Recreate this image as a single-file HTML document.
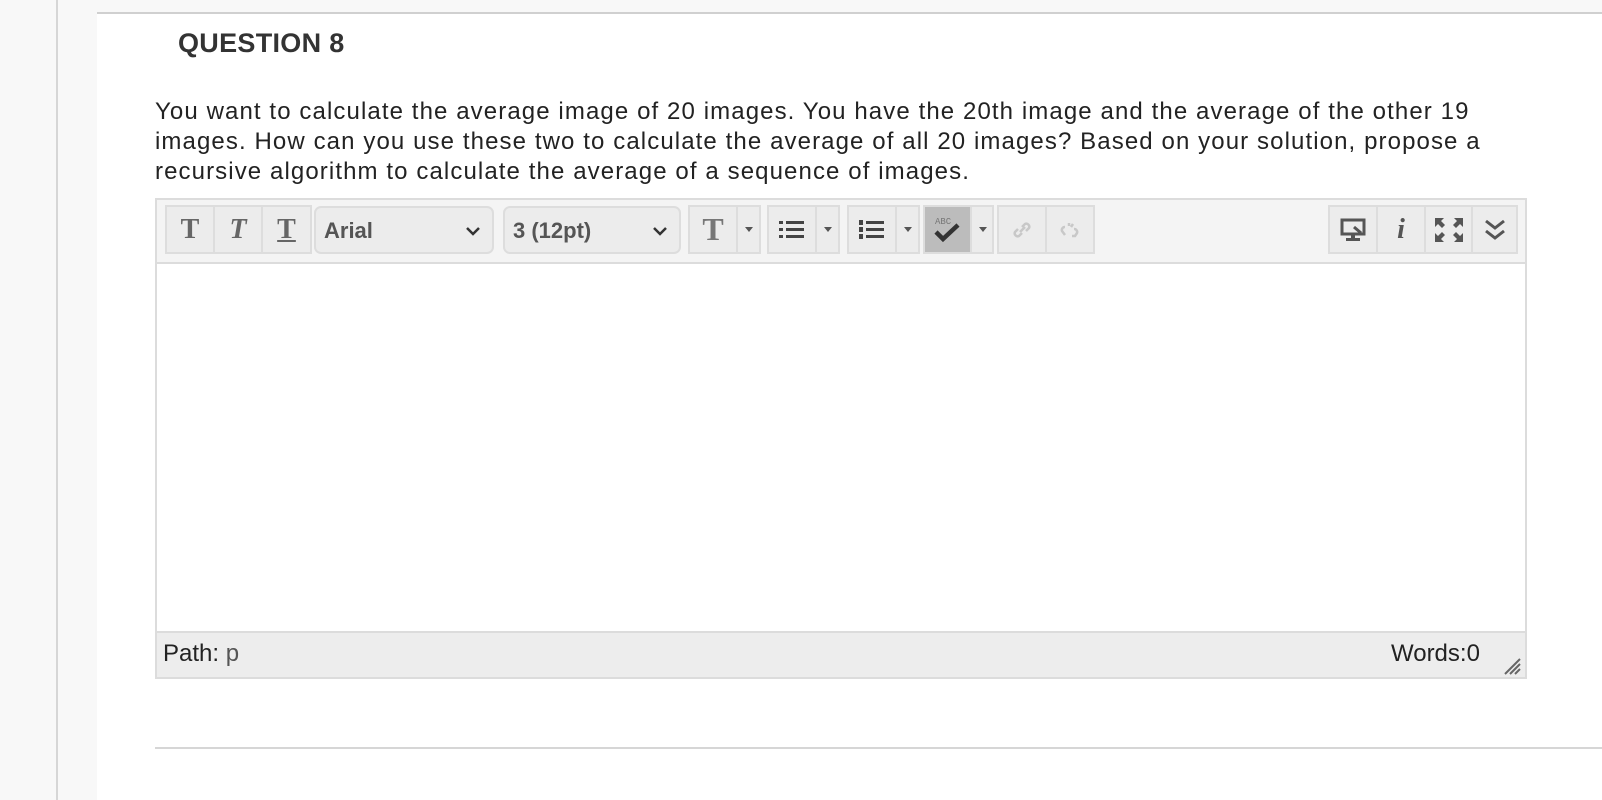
<!DOCTYPE html>
<html><head><meta charset="utf-8"><style>
*{margin:0;padding:0;box-sizing:border-box}
body{width:1602px;height:800px;background:#f8f8f8;position:relative;overflow:hidden;font-family:"Liberation Sans",sans-serif}
.vl{position:absolute;left:56px;top:0;width:2px;height:800px;background:#d6d6d6}
.panel{position:absolute;left:97px;top:12px;width:1505px;height:788px;background:#fff;border-top:2px solid #d0d0d0}
h1{position:absolute;left:178px;top:28px;font-size:27px;font-weight:bold;color:#333;letter-spacing:0.3px}
.q{position:absolute;left:155px;top:97px;font-size:24px;line-height:30px;color:#222;letter-spacing:1.1px;white-space:nowrap}
.ed{position:absolute;left:155px;top:198px;width:1372px;height:481px;border:2px solid #dcdcdc;background:#fff}
.tb{position:absolute;left:0;top:0;width:1368px;height:64px;background:#f4f4f4;border-bottom:2px solid #dcdcdc}
.st{position:absolute;left:0;top:431px;width:1368px;height:46px;background:#ededed;border-top:2px solid #dcdcdc;font-size:24px;color:#222}
.b{position:absolute;top:5px;height:49px;border:2px solid #ddd;background:#ececec}
.cell{position:absolute;top:0;height:45px;border-right:2px solid #ddd;display:flex;align-items:center;justify-content:center;color:#666}
.sel{position:absolute;top:6px;height:48px;border:2px solid #ddd;border-radius:7px;background:#ececec;font-size:22px;font-weight:bold;color:#555;padding:10px 8px}
.sel svg{position:absolute;right:12px;top:18px}
.line{position:absolute;left:155px;top:747px;width:1447px;height:2px;background:#d6d6d6}
</style></head><body>
<div class="vl"></div>
<div class="panel"></div>
<h1>QUESTION 8</h1>
<div class="q">You want to calculate the average image of 20 images. You have the 20th image and the average of the other 19<br>images. How can you use these two to calculate the average of all 20 images? Based on your solution, propose a<br>recursive algorithm to calculate the average of a sequence of images.</div>
<div class="ed">
 <div class="tb">
  <div class="b" style="left:8px;width:147px">
   <div class="cell" style="left:0;width:48px;font:bold 28px 'Liberation Serif',serif">T</div>
   <div class="cell" style="left:48px;width:48px;font:italic bold 28px 'Liberation Serif',serif">T</div>
   <div class="cell" style="left:96px;width:47px;border:none;font:bold 28px 'Liberation Serif',serif;text-decoration:underline">T</div>
  </div>
  <div class="sel" style="left:157px;width:180px">Arial<svg width="14" height="10"><path d="M1 2l6 6 6-6" stroke="#333" stroke-width="2.5" fill="none"/></svg></div>
  <div class="sel" style="left:346px;width:178px">3 (12pt)<svg width="14" height="10"><path d="M1 2l6 6 6-6" stroke="#333" stroke-width="2.5" fill="none"/></svg></div>
  <div class="b" style="left:531px;width:73px">
   <div class="cell" style="left:0;width:48px;font:bold 32px 'Liberation Serif',serif;color:#777">T</div>
   <div class="cell" style="left:48px;width:21px;border:none"><svg width="8" height="5"><path d="M0 0h8L4 5z" fill="#555"/></svg></div>
  </div>
  <div class="b" style="left:610px;width:73px">
   <div class="cell" style="left:0;width:48px"><svg width="26" height="20"><g fill="#444"><rect x="0" y="1" width="4" height="3"/><rect x="0" y="8" width="4" height="3"/><rect x="0" y="15" width="4" height="3"/><rect x="7" y="1" width="18" height="3"/><rect x="7" y="8" width="18" height="3"/><rect x="7" y="15" width="18" height="3"/></g></svg></div>
   <div class="cell" style="left:48px;width:21px;border:none"><svg width="8" height="5"><path d="M0 0h8L4 5z" fill="#555"/></svg></div>
  </div>
  <div class="b" style="left:690px;width:73px">
   <div class="cell" style="left:0;width:48px"><svg width="26" height="22"><g fill="#444"><rect x="0" y="1" width="4" height="5"/><rect x="0" y="8" width="4" height="5"/><rect x="0" y="15" width="4" height="5"/><rect x="7" y="2" width="18" height="3"/><rect x="7" y="9" width="18" height="3"/><rect x="7" y="16" width="18" height="3"/></g></svg></div>
   <div class="cell" style="left:48px;width:21px;border:none"><svg width="8" height="5"><path d="M0 0h8L4 5z" fill="#555"/></svg></div>
  </div>
  <div class="b" style="left:766px;width:71px">
   <div class="cell" style="left:0;width:47px;background:#bcbcbc"><svg width="34" height="32"><text x="4" y="10" font-size="9" font-family="Liberation Mono" fill="#777">ABC</text><path d="M5 18l7 7 15-14" stroke="#333" stroke-width="4.5" fill="none"/></svg></div>
   <div class="cell" style="left:48px;width:19px;border:none"><svg width="8" height="5"><path d="M0 0h8L4 5z" fill="#555"/></svg></div>
  </div>
  <div class="b" style="left:840px;width:98px">
   <div class="cell" style="left:0;width:48px"><svg width="22" height="22"><path d="M9 13l5-5M7 10l-3 3a3 3 0 004 4l3-3M15 12l3-3a3 3 0 00-4-4l-3 3" stroke="#c8c8c8" stroke-width="2.5" fill="none"/></svg></div>
   <div class="cell" style="left:48px;width:46px;border:none"><svg width="24" height="22"><path d="M7 8a3 3 0 00-3 4l3 4M11 4v3M15 5l-2 3M16 10a3 3 0 013 4l-2 3h-3" stroke="#c8c8c8" stroke-width="2.5" fill="none"/></svg></div>
  </div>
  <div class="b" style="left:1171px;width:190px">
   <div class="cell" style="left:0;width:48px"><svg width="26" height="24"><rect x="2" y="2" width="22" height="14" stroke="#555" stroke-width="3" fill="none"/><path d="M14 9l7 6" stroke="#555" stroke-width="3"/><rect x="11" y="16" width="4" height="4" fill="#555"/><rect x="6" y="20" width="14" height="3" fill="#555"/></svg></div>
   <div class="cell" style="left:48px;width:48px;font:italic bold 28px 'Liberation Serif',serif;color:#555">i</div>
   <div class="cell" style="left:96px;width:47px"><svg width="28" height="24"><g fill="#555"><path d="M0 0h9L6 3l4 4-3 3-4-4-3 3zM28 0h-9l3 3-4 4 3 3 4-4 3 3zM0 24h9L6 21l4-4-3-3-4 4-3-3zM28 24h-9l3-3-4-4 3-3 4 4 3-3z"/></g></svg></div>
   <div class="cell" style="left:143px;width:43px;border:none"><svg width="22" height="24"><path d="M2 3l9 7 9-7M2 13l9 7 9-7" stroke="#555" stroke-width="3" fill="none"/></svg></div>
  </div>
 </div>
 <div class="st"><span style="position:absolute;left:6px;top:7px">Path: <span style="color:#555">p</span></span><span style="position:absolute;left:1234px;top:7px">Words:0</span>
 <svg style="position:absolute;right:4px;bottom:2px" width="18" height="18"><path d="M2 17L17 2M7 17L17 7M12 17l5-5" stroke="#666" stroke-width="2"/></svg></div>
</div>
<div class="line"></div>
</body></html>
